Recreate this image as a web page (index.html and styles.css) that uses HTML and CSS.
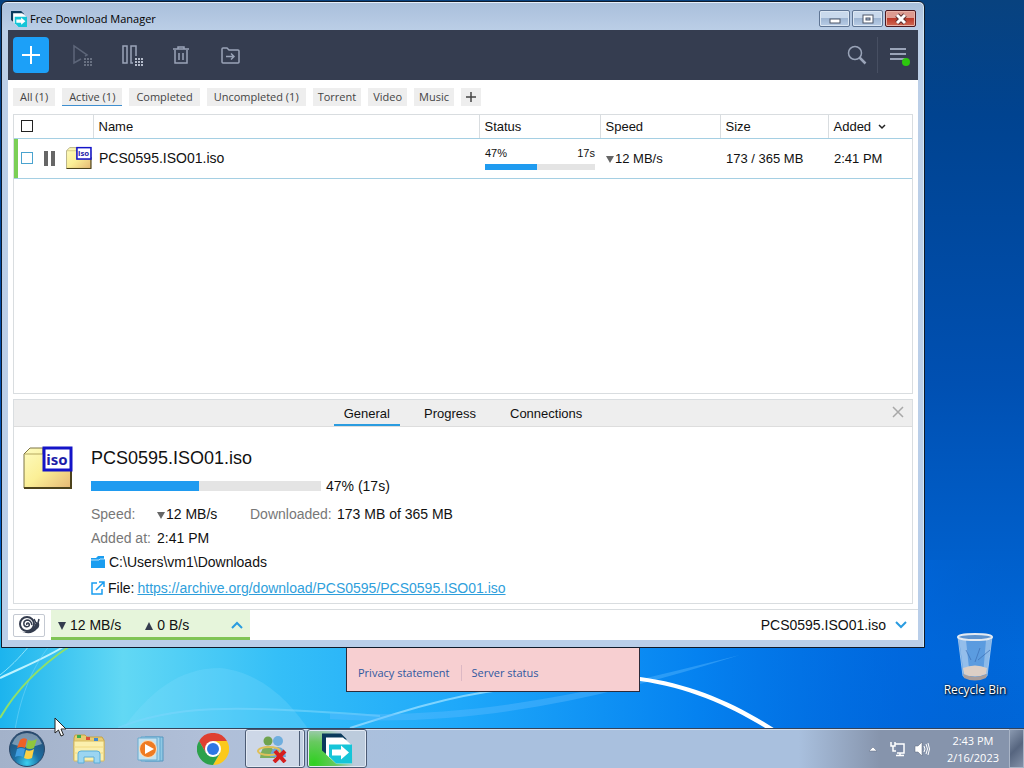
FILE: index.html
```html
<!DOCTYPE html>
<html lang="en">
<head>
    <meta charset="UTF-8">
    <meta name="viewport" content="width=device-width, initial-scale=1">
    <title>Free Download Manager</title>
    <link rel="stylesheet" href="styles.css">
</head>
<body>

<!-- shared icons -->
<svg class="defs" width="0" height="0">
    <defs>
        <linearGradient id="folderFill" x1="0" y1="0" x2="1" y2="1">
            <stop offset="0" stop-color="#fdfbc0"/>
            <stop offset=".5" stop-color="#fbef96"/>
            <stop offset="1" stop-color="#e6b874"/>
        </linearGradient>
    </defs>
    <symbol id="isoFile" viewBox="0 0 50 44">
        <path d="M1 8 L7 2 H20 V8 H48 V42 H1 Z" fill="url(#folderFill)" stroke="#7d7444"/>
        <path d="M2 8 H20" stroke="#b5a860"/>
        <path d="M1 42 H48 V20" fill="none" stroke="#4d431c" stroke-width="2"/>
        <rect x="21" y="2" width="27" height="22" fill="#fff" stroke="#1414c8" stroke-width="3"/>
    </symbol>
    <symbol id="fdmLogo" viewBox="0 0 30 30">
        <path d="M0 0 H19 L25 6 H6 V22 L0 17 Z" fill="#0b3a5c"/>
        <path d="M4 4 H21 L30 12 V30 H14 L4 21 Z" fill="#fff"/>
        <path d="M7 11 H30 V30 H14 L7 23 Z" fill="#16c5d8"/>
        <path d="M10 16 H19 V12 L27 19 L19 26 V22 H10 Z" fill="#fff"/>
    </symbol>
</svg>

<main class="desktop">
    <svg class="wallpaper" viewBox="0 0 1024 768" preserveAspectRatio="none">
        <defs>
            <linearGradient id="sky" x1="0" y1="0" x2="0" y2="1">
                <stop offset="0" stop-color="#08427f"/>
                <stop offset=".15" stop-color="#004390"/>
                <stop offset=".5" stop-color="#0050b2"/>
                <stop offset=".85" stop-color="#0068da"/>
                <stop offset="1" stop-color="#0064d6"/>
            </linearGradient>
            <linearGradient id="glow" x1="0" y1="0" x2="1" y2="0">
                <stop offset="0" stop-color="#1cb4ee"/>
                <stop offset=".12" stop-color="#62d8f4"/>
                <stop offset=".27" stop-color="#35bff7"/>
                <stop offset=".45" stop-color="#1ea8fa"/>
                <stop offset=".68" stop-color="#0582f0"/>
                <stop offset=".88" stop-color="#0068e0" stop-opacity=".6"/>
                <stop offset="1" stop-color="#0060d0" stop-opacity="0"/>
            </linearGradient>
            <radialGradient id="floor" cx=".4" cy="1" r=".6">
                <stop offset="0" stop-color="#08aefa" stop-opacity=".75"/>
                <stop offset="1" stop-color="#08aefa" stop-opacity="0"/>
            </radialGradient>
        </defs>
        <rect width="1024" height="768" fill="url(#sky)"/>
        <rect y="560" width="1024" height="208" fill="url(#glow)"/>
        <ellipse cx="150" cy="740" rx="260" ry="80" fill="url(#floor)"/>
        <path d="M118 735 C150 690 180 668 220 668 C260 672 290 700 312 735 Z" fill="#8be0ff" fill-opacity=".22"/>
        <path d="M0 678 C30 664 52 655 66 645" fill="none" stroke="#bdf3ff" stroke-width="2"/>
        <path d="M0 675 C14 664 24 652 30 645" fill="none" stroke="#8ce4fb"/>
        <path d="M15 730 C20 700 30 670 50 645" fill="none" stroke="#6fd4f8" stroke-opacity=".6"/>
        <path d="M0 718 C16 690 40 666 70 646" fill="none" stroke="#8fe06a" stroke-width="2"/>
        <path d="M118 728 C170 706 230 704 380 716" fill="none" stroke="#7ad6fb" stroke-opacity=".6" stroke-width="2"/>
        <path d="M350 728 C400 712 450 696 500 690" fill="none" stroke="#7fd4ff" stroke-width="2"/>
        <path d="M330 713 C480 720 600 690 740 655 C610 696 480 728 330 719 Z" fill="#5ebcff" fill-opacity=".4"/>
        <path d="M640 677 C694 684 742 706 786 736 L770 731 C730 706 690 688 640 681 Z" fill="#fff"/>
    </svg>

    <a href="#" class="desktop-icon">
        <svg width="38" height="50" viewBox="0 0 38 50">
            <path d="M2 5 L7 44 Q19 51 31 44 L36 5 Z" fill="#8cb8e4" fill-opacity=".65" stroke="#c4dcf2" stroke-opacity=".7"/>
            <path d="M3 7 L8 44 L14 46 L10 8 Z" fill="#fff" fill-opacity=".35"/>
            <path d="M30 8 L27 43 L31 42 L35 8 Z" fill="#fff" fill-opacity=".3"/>
            <path d="M10 18 L15 28 M24 16 L19 30 M34 18 L22 28" stroke="#3c6eb4" stroke-opacity=".7"/>
            <path d="M7 36 Q19 31 31 36 L30 42 Q19 47 8 42 Z" fill="#dccfc6"/>
            <path d="M7 42 Q19 48 31 42 L30 46 Q19 51 8 46 Z" fill="#a99e9c"/>
            <ellipse cx="19" cy="5" rx="17" ry="3" fill="#5d93cf" stroke="#e3eaf2" stroke-width="2"/>
        </svg>
        <span>Recycle Bin</span>
    </a>

    <div class="pink-panel">
        <a href="#">Privacy statement</a>
        <a href="#">Server status</a>
    </div>

    <section class="window">
        <header class="titlebar">
            <svg width="16" height="16"><use href="#fdmLogo"/></svg>
            <h1>Free Download Manager</h1>
            <div class="window-buttons">
                <button type="button" aria-label="Minimize">
                    <svg width="12" height="12"><rect x="1" y="6" width="10" height="4" fill="#fff" stroke="#4c5668"/></svg>
                </button>
                <button type="button" aria-label="Maximize">
                    <svg width="12" height="12"><rect x="1" y="2" width="10" height="8" fill="#fff" stroke="#4c5668"/><rect x="4" y="5" width="4" height="2" fill="#a9bdd8" stroke="#4c5668"/></svg>
                </button>
                <button type="button" class="close" aria-label="Close">
                    <svg width="12" height="12"><path d="M2 2 L10 10 M10 2 L2 10" stroke="#5c3030" stroke-width="5"/><path d="M2 2 L10 10 M10 2 L2 10" stroke="#fff" stroke-width="3"/></svg>
                </button>
            </div>
        </header>

        <div class="client">
            <nav class="toolbar">
                <button type="button" class="add" aria-label="Add download">
                    <svg width="20" height="20"><path d="M10 1 V19 M1 10 H19" stroke="#fff" stroke-width="2"/></svg>
                </button>
                <button type="button" class="tool dim" aria-label="Start all">
                    <svg width="22" height="24"><path d="M9 16 L2 20 V3 L15 12 L13 13" fill="none" stroke="#9aa4b8" stroke-width="1.5"/><path d="M12 16 H21 M12 19 H21 M12 22 H21" stroke="#b5bccb" stroke-width="2" stroke-dasharray="2 1"/></svg>
                </button>
                <button type="button" class="tool" aria-label="Pause all">
                    <svg width="22" height="24"><path d="M2 3 H6 V20 H2 Z M15 13 V3 H10 V20 H12" fill="none" stroke="#9aa4b8" stroke-width="1.5"/><path d="M14 16 H22 M14 19 H22 M14 22 H22" stroke="#b5bccb" stroke-width="2" stroke-dasharray="2 1"/></svg>
                </button>
                <button type="button" class="tool" aria-label="Delete">
                    <svg width="22" height="24"><path d="M3 6 H19 M8 6 V4 H14 V6 M5 7 V20 H17 V7 M9 10 V17 M13 10 V17" fill="none" stroke="#9aa4b8" stroke-width="1.5"/></svg>
                </button>
                <button type="button" class="tool" aria-label="Move to folder">
                    <svg width="22" height="24"><path d="M3 19 V6 Q3 5 4 5 H8 L10 7 H19 Q20 7 20 8 V19 Q20 20 19 20 H4 Q3 20 3 19 Z M7 13.5 H15 M12 10.5 L15 13.5 L12 16.5" fill="none" stroke="#9aa4b8" stroke-width="1.5"/></svg>
                </button>
                <div class="toolbar-right">
                    <button type="button" class="search" aria-label="Search">
                        <svg width="20" height="20"><circle cx="8" cy="8" r="6.5" fill="none" stroke="#9aa4b8" stroke-width="1.5"/><path d="M12.5 12.5 L18.5 18.5" stroke="#9aa4b8" stroke-width="2.5"/></svg>
                    </button>
                    <button type="button" class="menu" aria-label="Menu">
                        <svg width="22" height="22"><path d="M2 5 H18 M2 10 H18 M2 15 H18" stroke="#9aa4b8" stroke-width="2"/><circle cx="18" cy="18" r="4" fill="#2cc80e"/></svg>
                    </button>
                </div>
            </nav>

            <div class="filters">
                <button type="button">All (1)</button>
                <button type="button" class="active">Active (1)</button>
                <button type="button">Completed</button>
                <button type="button">Uncompleted (1)</button>
                <button type="button" class="tag">Torrent</button>
                <button type="button" class="tag">Video</button>
                <button type="button" class="tag">Music</button>
                <button type="button" class="tag" aria-label="Add tag">
                    <svg width="10" height="10"><path d="M5 0 V10 M0 5 H10" stroke="#444" stroke-width="1.5"/></svg>
                </button>
            </div>

            <div class="list">
                <table>
                    <colgroup>
                        <col class="col-check"><col><col class="col-status"><col class="col-speed"><col class="col-size"><col class="col-added">
                    </colgroup>
                    <thead>
                    <tr>
                        <th class="check"><div class="lead"><input type="checkbox" aria-label="Select all"></div></th>
                        <th>Name</th>
                        <th>Status</th>
                        <th>Speed</th>
                        <th>Size</th>
                        <th>Added <svg width="8" height="8"><path d="M1 2 L4 5 L7 2" fill="none" stroke="#222" stroke-width="1.5"/></svg></th>
                    </tr>
                    </thead>
                    <tbody>
                    <tr>
                        <td class="check">
                            <div class="lead">
                                <input type="checkbox" aria-label="Select PCS0595.ISO01.iso">
                                <button type="button" class="pause" aria-label="Pause"></button>
                                <svg width="26" height="24" viewBox="0 0 50 44">
                                    <use href="#isoFile"/>
                                    <text class="iso-text" x="34" y="19">iso</text>
                                </svg>
                            </div>
                        </td>
                        <td class="name">PCS0595.ISO01.iso</td>
                        <td>
                            <div class="status"><span>47%</span><span>17s</span></div>
                            <div class="bar"><div class="fill" style="width:47%"></div></div>
                        </td>
                        <td><i class="down"></i>12 MB/s</td>
                        <td>173 / 365 MB</td>
                        <td>2:41 PM</td>
                    </tr>
                    </tbody>
                </table>
            </div>

            <section class="details">
                <div class="details-tabs">
                    <button type="button" class="active">General</button>
                    <button type="button">Progress</button>
                    <button type="button">Connections</button>
                    <button type="button" class="close-details" aria-label="Close details">
                        <svg width="12" height="12"><path d="M1 1 L11 11 M11 1 L1 11" stroke="#a8a8a8" stroke-width="1.5"/></svg>
                    </button>
                </div>
                <div class="details-body">
                    <svg width="50" height="44" viewBox="0 0 50 44">
                        <use href="#isoFile"/>
                        <text class="iso-text" x="34" y="19">iso</text>
                    </svg>
                    <div class="info">
                        <h2>PCS0595.ISO01.iso</h2>
                        <div class="progress">
                            <div class="bar big"><div class="fill" style="width:47%"></div></div>
                            <span>47% (17s)</span>
                        </div>
                        <dl>
                            <dt>Speed:</dt>
                            <dd><i class="down"></i>12 MB/s</dd>
                            <dt>Downloaded:</dt>
                            <dd>173 MB of 365 MB</dd>
                            <dt>Added at:</dt>
                            <dd>2:41 PM</dd>
                        </dl>
                        <p class="path">
                            <svg width="14" height="12"><path d="M0 4 V2 H5 L7 0 H13 V3 H14 V12 H0 Z" fill="#1a9df0"/><path d="M0 4 H8 L9 3 H14" fill="none" stroke="#fff" stroke-opacity=".7"/></svg>
                            C:\Users\vm1\Downloads
                        </p>
                        <p class="file">
                            <svg width="14" height="14"><path d="M6 2 H1 V13 H11 V8 M8 1 H13 V6 M13 1 L5 9" fill="none" stroke="#1a9df0" stroke-width="1.5"/></svg>
                            File: <a href="#">https://archive.org/download/PCS0595/PCS0595.ISO01.iso</a>
                        </p>
                    </div>
                </div>
            </section>

            <footer class="statusbar">
                <button type="button" class="snail" aria-label="Snail mode">
                    <svg width="22" height="18"><path d="M1 15 Q9 18 14 13 Q17 10 18 6 L21 7 Q22 11 19 13 Q15 18 8 17 Z" fill="#343c4e"/><path d="M18 7 L16 3 M20 7 L21 3" stroke="#343c4e" stroke-width="1.5"/><circle cx="9" cy="8" r="7" fill="#fff" stroke="#343c4e" stroke-width="2"/><path d="M9 9 Q8 7 10 7 Q12 8 11 10 Q8 12 6 9 Q5 5 9 4 Q13 4 14 9" fill="none" stroke="#343c4e" stroke-width="1.5"/></svg>
                </button>
                <button type="button" class="speeds">
                    <span><i class="down dark"></i>12 MB/s</span>
                    <span><i class="up"></i>0 B/s</span>
                    <svg width="12" height="8"><path d="M1 7 L6 2 L11 7" fill="none" stroke="#2a9ce0" stroke-width="2"/></svg>
                </button>
                <button type="button" class="current">PCS0595.ISO01.iso
                    <svg width="12" height="8"><path d="M1 1 L6 6 L11 1" fill="none" stroke="#2a9ce0" stroke-width="2"/></svg>
                </button>
            </footer>
        </div>
    </section>
</main>

<footer class="taskbar">
    <button type="button" class="start" aria-label="Start">
        <svg width="38" height="38" viewBox="0 0 38 38">
            <defs>
                <radialGradient id="orb" cx=".5" cy=".9" r=".9">
                    <stop offset="0" stop-color="#3cd0f0"/>
                    <stop offset=".4" stop-color="#1c6fa4"/>
                    <stop offset="1" stop-color="#27496e"/>
                </radialGradient>
            </defs>
            <circle cx="19" cy="19" r="17.5" fill="url(#orb)" stroke="#2b4768"/>
            <path d="M4 14 Q8 3 19 3 Q30 3 34 14 Q19 20 4 14 Z" fill="#fff" fill-opacity=".38"/>
            <path d="M12 10 Q15 7 19 9 L17 18 Q13 16 9 18 Z" fill="#ee6127"/>
            <path d="M20 10 Q24 12 29 9 L26 18 Q22 20 18 18 Z" fill="#90c63d"/>
            <path d="M9 19 Q13 17 17 19 L15 27 Q11 25 7 27 Z" fill="#3f9de0"/>
            <path d="M18 20 Q22 22 26 19 L24 28 Q20 30 16 28 Z" fill="#fbd045"/>
        </svg>
    </button>
    <nav class="tasks">
        <button type="button" aria-label="Explorer">
            <svg width="34" height="30" viewBox="0 0 34 30">
                <path d="M2 4 L3 1 H13 L15 3 H30 L32 6 V26 H2 Z" fill="#e8cc72" stroke="#c5a347"/>
                <path d="M2 7 H32 V27 H2 Z" fill="#fbefad" stroke="#d8bb61"/>
                <rect x="5" y="1" width="4" height="3" fill="#3cae4c"/><rect x="14" y="3" width="4" height="3" fill="#dd5037"/><rect x="22" y="4" width="4" height="3" fill="#3f88d0"/>
                <path d="M2 13 H32 M2 19 H32" stroke="#f1d982"/>
                <path d="M6 29 V20 Q6 17 9 17 H25 Q28 17 28 20 V29 H22 V23 H12 V29 Z" fill="#9bd5f1" stroke="#5aaed9"/>
            </svg>
        </button>
        <button type="button" aria-label="Media Player">
            <svg width="28" height="26" viewBox="0 0 28 26">
                <path d="M8 1 H26 V25 H8 Z" fill="#8fc8e4" stroke="#5496bf"/><path d="M4 1 H23 V25 H4 Z" fill="#a8d6ec" stroke="#5fa5cd"/><path d="M1 2 H20 V24 H1 Z" fill="#c5e2f0" stroke="#6babce"/>
                <circle cx="11" cy="13" r="8.5" fill="#ef7b22" stroke="#fbe0bf"/><path d="M8 8 L17 13 L8 18 Z" fill="#fff"/>
            </svg>
        </button>
        <button type="button" aria-label="Chrome">
            <svg width="32" height="32" viewBox="0 0 32 32">
                <path d="M2.1 8 A16 16 0 0 1 29.900 8 H16 L9 20 Z" fill="#df4032"/>
                <path d="M29.900 8 A16 16 0 0 1 16 32 L23 20 L16 8 Z" fill="#fbc91c"/>
                <path d="M16 32 A16 16 0 0 1 2.1 8 L9 20 L23 20 Z" fill="#2ca14b"/>
                <circle cx="16" cy="16" r="8" fill="#fff"/><circle cx="16" cy="16" r="6" fill="#2f77e4"/>
            </svg>
        </button>
        <button type="button" class="open stacked" aria-label="Messenger">
            <svg width="32" height="28" viewBox="0 0 32 28">
                <circle cx="12" cy="6" r="4.5" fill="#6fa34e"/><path d="M4 23 Q5 11 12 11 Q18 11 19 23 Z" fill="#7cae5c"/>
                <circle cx="22" cy="6" r="5" fill="#6faede"/><path d="M14 22 Q15 12 22 12 Q29 12 30 22 Z" fill="#6ba6d6"/>
                <ellipse cx="13" cy="16" rx="11" ry="4" fill="none" stroke="#dfc05a" stroke-width="2"/>
                <path d="M19 16 L29 27 M29 16 L18 27" stroke="#d51e1e" stroke-width="4"/>
            </svg>
        </button>
        <button type="button" class="open current-task" aria-label="Free Download Manager">
            <svg width="30" height="31"><use href="#fdmLogo"/></svg>
        </button>
    </nav>
    <div class="tray">
        <svg width="10" height="6"><path d="M1 5 L5 1 L9 5 Z" fill="#fff" stroke="#5d6980" stroke-width=".5"/></svg>
        <svg width="16" height="16"><path d="M5 3 H14 V12 H7" fill="#7b8aa6" stroke="#fff" stroke-width="1.5"/><path d="M1 1 V5 H5 V1 M3 5 V10 H6 M10 12 V14 M6 14.5 H14" fill="none" stroke="#fff" stroke-width="1.5"/></svg>
        <svg width="16" height="16"><path d="M1 5 H4 L8 1 V15 L4 11 H1 Z" fill="#fff" stroke="#59657a" stroke-width=".5"/><path d="M10 5 Q12 8 10 11 M12 3 Q15 8 12 13 M14 2 Q17 8 14 14" fill="none" stroke="#fff"/></svg>
        <time datetime="2023-02-16T14:43">2:43 PM<br>2/16/2023</time>
        <button type="button" class="show-desktop" aria-label="Show desktop"></button>
    </div>
</footer>

<svg class="cursor" width="14" height="20"><path d="M1 1 V16 L4.5 13 L7 19 L9.5 18 L7 12 H12 Z" fill="#fff" stroke="#222"/></svg>

</body>
</html>
```

FILE: styles.css
```css
*{
    box-sizing:border-box;
}
body{
    margin:0;
    height:100vh;
    display:flex;
    flex-direction:column;
    overflow:hidden;
    font-family:"Liberation Sans", Arial, sans-serif;
    font-size:13px;
    color:#111;
}
button{
    font:inherit;
    color:inherit;
    background:none;
    border:0;
    padding:0;
}
svg{
    display:block;
    flex:none;
}
h1,h2,p,dl,dd{
    margin:0;
    font-weight:normal;
}
.defs{
    position:absolute;
}
.iso-text{
    font:bold 15px "Noto Sans", sans-serif;
    text-anchor:middle;
    fill:#1c1ca8;
}

/* desktop */
.desktop{
    flex:1;
    position:relative;
    background:#004a9c;
}
.wallpaper{
    position:absolute;
    left:0;
    top:0;
    width:100%;
    height:100vh;
}
.desktop-icon{
    position:absolute;
    right:12px;
    bottom:30px;
    width:74px;
    display:flex;
    flex-direction:column;
    align-items:center;
    font:12px/16px "Open Sans", sans-serif;
    color:#fff;
    text-decoration:none;
    white-space:nowrap;
    text-shadow:1px 1px 2px #000, 0 0 2px #000;
}
.pink-panel{
    position:absolute;
    left:346px;
    bottom:36px;
    width:294px;
    height:60px;
    padding:0 11px 10px;
    display:flex;
    align-items:flex-end;
    background:#f7cfd1;
    border:1px solid #2b2b3a;
    font:11px/16px "Open Sans", sans-serif;
}
.pink-panel a{
    color:#3058a0;
    text-decoration:none;
}
.pink-panel a + a{
    margin-left:11px;
    padding-left:10px;
    border-left:1px solid #dcb8c4;
}

/* window */
.window{
    position:absolute;
    left:1px;
    top:1px;
    right:99px;
    bottom:80px;
    display:flex;
    flex-direction:column;
    padding:0 6px 7px;
    border:1px solid #0f1a2a;
    border-radius:6px 6px 0 0;
    background:linear-gradient(#a9bfdb, #bccfe7 30px, #b9cee9);
    box-shadow:inset 0 1px #e6eef8, inset -1px 0 #cfe6f5;
}
.titlebar{
    height:28px;
    padding:0 2px 0 3px;
    display:flex;
    align-items:center;
    gap:3px;
}
.titlebar h1{
    padding-top:5px;
    font:11px/16px "Open Sans", sans-serif;
    color:#000;
}
.titlebar > svg{
    margin-top:5px;
}
.window-buttons{
    display:flex;
    gap:2px;
    margin:5px 0 0 auto;
}
.window-buttons button{
    width:31px;
    height:17px;
    display:flex;
    align-items:center;
    justify-content:center;
    border:1px solid #5f7594;
    border-radius:2px;
    background:linear-gradient(#c9d9ec 45%, #9fb6d3 50%, #b9cde6);
    box-shadow:inset 0 0 0 1px #dce7f3;
}
.window-buttons .close{
    border-color:#4a1820;
    background:linear-gradient(#dd9a90 45%, #bd3a2a 50%, #cf6a55);
    box-shadow:inset 0 0 0 1px #e8b3a8;
}
.client{
    flex:1;
    min-height:0;
    display:flex;
    flex-direction:column;
    background:#fff;
}

/* toolbar */
.toolbar{
    height:50px;
    padding:0 5px;
    display:flex;
    align-items:center;
    gap:13px;
    background:#353d50;
}
.toolbar button{
    display:flex;
    align-items:center;
    justify-content:center;
    height:36px;
}
.toolbar .add{
    width:36px;
    background:#1ca0f8;
    border-radius:4px;
}
.toolbar .tool{
    width:36px;
}
.toolbar .add + .tool{
    margin-left:3px;
}
.toolbar .dim{
    opacity:.4;
}
.toolbar-right{
    margin-left:auto;
    display:flex;
    align-items:center;
}
.toolbar .search{
    width:40px;
}
.toolbar .menu{
    width:36px;
    padding-right:3px;
    justify-content:flex-end;
    border-left:1px solid #474f62;
}

/* filters */
.filters{
    height:34px;
    padding:8px 5px 0;
    display:flex;
    align-items:flex-start;
    gap:7px;
}
.filters button{
    height:18px;
    padding:0 7px;
    background:#eee;
    font:11px/18px "Open Sans", sans-serif;
    color:#444;
}
.filters .tag{
    padding:0 5px;
}
.filters .active{
    border-bottom:1px solid #3f8fd0;
}

/* download list */
.list{
    flex:1;
    min-height:0;
    margin:0 5px;
    border:1px solid #d9dde0;
}
table{
    width:100%;
    table-layout:fixed;
    border-collapse:collapse;
}
.col-check{
    width:79px;
}
.col-status{
    width:121px;
}
.col-speed{
    width:120px;
}
.col-size{
    width:108px;
}
.col-added{
    width:84px;
}
th,td{
    padding:0 5px;
    text-align:left;
    font-weight:normal;
    white-space:nowrap;
    border-bottom:1px solid #a5cfe3;
}
th{
    height:23px;
}
th + th{
    border-left:1px solid #d9dde0;
}
th svg{
    display:inline-block;
    margin-left:3px;
}
td{
    height:40px;
}
td + td{
    padding-left:6px;
}
.check{
    padding:0 0 0 7px;
}
td.check{
    box-shadow:inset 4px 0 #7bcf55;
}
.lead{
    display:flex;
    align-items:center;
}
input[type="checkbox"]{
    appearance:none;
    width:12px;
    height:12px;
    margin:0;
    border:1px solid #222;
    background:#fff;
}
td input[type="checkbox"]{
    border-color:#4aa3cf;
}
.pause{
    width:11px;
    height:15px;
    margin:0 11px;
    border:solid #666;
    border-width:0 4px;
}
td.name{
    font-size:14px;
}
.status{
    display:flex;
    justify-content:space-between;
    font-size:11px;
    line-height:12px;
    margin-bottom:5px;
}
.bar{
    height:6px;
    background:#e4e4e4;
}
.fill{
    height:100%;
    background:#1f9bf0;
}
.down,.up{
    display:inline-block;
    border:solid transparent;
    border-width:0 4px;
    vertical-align:middle;
}
.down{
    border-top:7px solid #666;
    margin-right:1px;
}
.up{
    border-bottom:8px solid #343c4e;
    margin-right:4px;
}
.down.dark{
    border-top:8px solid #343c4e;
    margin-right:4px;
}

/* details */
.details{
    height:205px;
    margin:5px 5px 0;
    border:1px solid #d9dde0;
}
.details-tabs{
    height:27px;
    display:flex;
    justify-content:center;
    gap:14px;
    position:relative;
    background:#eee;
    border-bottom:1px solid #ddd;
}
.details-tabs button{
    padding:0 10px;
}
.details-tabs .active{
    border-bottom:2px solid #2a9ce0;
    border-top:2px solid transparent;
}
.details-tabs .close-details{
    position:absolute;
    right:8px;
    top:6px;
    padding:0;
}
.details-body{
    display:flex;
    gap:18px;
    padding:19px 9px 0;
    font-size:14px;
    line-height:24px;
}
h2{
    font-size:18px;
    line-height:24px;
}
.progress{
    display:flex;
    align-items:center;
    gap:5px;
    height:32px;
}
.bar.big{
    width:230px;
    height:10px;
}
dl{
    display:grid;
    grid-template-columns:66px 93px 87px auto;
    justify-content:start;
    white-space:nowrap;
}
dt{
    color:#777;
}
.path,.file{
    display:flex;
    align-items:center;
    gap:4px;
}
.file{
    gap:3px;
    padding-top:2px;
}
.file a{
    color:#2f9fdc;
}

/* status bar */
.statusbar{
    height:31px;
    margin-top:5px;
    padding-left:5px;
    display:flex;
    align-items:center;
    border-top:1px solid #d9dde0;
    font-size:14px;
}
.snail{
    width:32px;
    height:23px;
    display:flex;
    align-items:center;
    justify-content:center;
    border:1px solid #c4c9d2;
    border-radius:2px;
}
.speeds{
    width:199px;
    height:30px;
    margin-left:6px;
    padding:2px 7px 0;
    display:flex;
    align-items:center;
    gap:24px;
    background:#e6f5db;
    border-bottom:3px solid #7fc455;
}
.speeds svg{
    margin-left:auto;
}
.current{
    margin-left:auto;
    padding-right:11px;
    display:flex;
    align-items:center;
    gap:9px;
}

/* taskbar */
.taskbar{
    height:40px;
    display:flex;
    position:relative;
    background:linear-gradient(90deg, #a3b2ca, #b0bfd8 20%, #a9c0de 40%, #a9c0de 78%, #8694ac 86%);
    border-top:1px solid #33435c;
    box-shadow:inset 0 1px #d5e0ee;
}
.start{
    margin:0 13px 0 8px;
}
.tasks{
    display:flex;
    align-items:stretch;
    gap:2px;
    margin-right:auto;
}
.tasks button{
    width:60px;
    display:flex;
    align-items:center;
    justify-content:center;
}
.tasks .open{
    border:1px solid #4c5b74;
    border-radius:3px;
    background:linear-gradient(135deg, #dbe3ef, #b3c2d8);
    box-shadow:inset 0 0 0 1px #e3eaf4;
}
.tasks .stacked{
    padding-right:6px;
    background:linear-gradient(90deg, #cdd7e7 53px, #4c5b74 53px 54px, #c3d0e2 54px);
}
.tasks .current-task{
    background:radial-gradient(circle at 10% 90%, #2fd020, #68c960 35%, #bccbdc 65%);
}
.tray{
    display:flex;
    align-items:center;
    gap:8px;
    color:#fff;
}
.tray > svg:first-child{
    margin-right:4px;
}
.tray time{
    margin:0 2px 0 9px;
    text-align:center;
    font:11px/17px "Open Sans", sans-serif;
}
.show-desktop{
    width:15px;
    height:39px;
    border:1px solid #a9b4c6;
    background:linear-gradient(135deg, #8a99b0, #56657f 50%, #8391a8);
}
.cursor{
    position:absolute;
    left:54px;
    top:717px;
}
```
